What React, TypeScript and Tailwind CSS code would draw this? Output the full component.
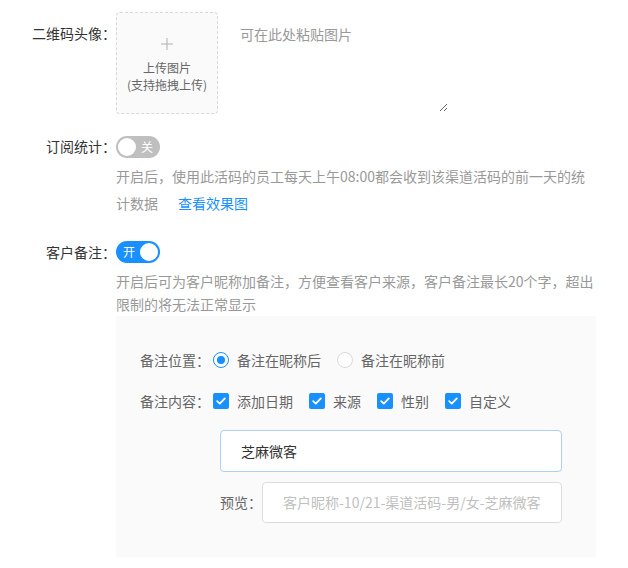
import React from "react";

const font = { fontFamily: '"Noto Sans CJK SC", "Noto Sans", sans-serif' };

function Check() {
  return (
    <span className="w-[16px] h-[16px] rounded-[2px] bg-[#1890ff] flex items-center justify-center shrink-0">
      <svg width="10" height="8" viewBox="0 0 10 8" fill="none">
        <path d="M1.2 4.2 L3.8 6.6 L8.8 1.4" stroke="#fff" strokeWidth="1.8" strokeLinecap="round" strokeLinejoin="round" />
      </svg>
    </span>
  );
}

function CheckItem({ label }: { label: string }) {
  return (
    <span className="flex items-center mr-[16px]">
      <Check />
      <span className="ml-[8px]">{label}</span>
    </span>
  );
}

export default function App() {
  return (
    <div className="w-[628px] h-[568px] bg-white text-[14px] text-[#333] pt-[12px] overflow-hidden" style={font}>
      {/* Row 1 */}
      <div className="flex items-start">
        <div className="w-[116px] text-right leading-[22px] pt-[10px]">二维码头像：</div>
        <div className="w-[102px] h-[102px] rounded-[4px] border border-dashed border-[#d9d9d9] bg-[#fafafa] flex flex-col items-center justify-center text-[12px] text-[#666] leading-[17px]">
          <svg width="12" height="12" viewBox="0 0 12 12" className="mb-[9px] mt-[5px]">
            <path d="M6 0 V12 M0 6 H12" stroke="#b0b0b0" strokeWidth="1" />
          </svg>
          <div>上传图片</div>
          <div>(支持拖拽上传)</div>
        </div>
        <textarea
          className="ml-[12px] w-[218px] h-[100px] px-[10px] pt-[11px] pb-[12px] leading-[22px] text-[14px] bg-transparent outline-none border-0 placeholder:text-[#999]"
          placeholder="可在此处粘贴图片"
          style={font}
        />
      </div>

      {/* Row 2 */}
      <div className="flex items-center mt-[22px]">
        <div className="w-[116px] text-right leading-[22px] -mt-[2px]">订阅统计：</div>
        <div className="w-[44px] h-[22px] rounded-full bg-[#bfbfbf] flex items-center px-[2px]">
          <span className="w-[18px] h-[18px] rounded-full bg-white" />
          <span className="flex-1 text-center text-white text-[12px] leading-[22px]">关</span>
        </div>
      </div>
      <div className="ml-[116px] w-[480px] mt-[5px] leading-[27px] text-[#999]">
        开启后，使用此活码的员工每天上午08:00都会收到该渠道活码的前一天的统计数据
        <span className="ml-[20px] text-[#1890ff]">查看效果图</span>
      </div>

      {/* Row 3 */}
      <div className="flex items-center mt-[24px]">
        <div className="w-[116px] text-right leading-[22px]">客户备注：</div>
        <div className="w-[44px] h-[22px] rounded-full bg-[#1890ff] flex items-center px-[2px]">
          <span className="flex-1 text-center text-white text-[12px] leading-[22px]">开</span>
          <span className="w-[18px] h-[18px] rounded-full bg-white" />
        </div>
      </div>
      <div className="ml-[116px] w-[480px] mt-[7px] leading-[23px] text-[#999]">
        开启后可为客户昵称加备注，方便查看客户来源，客户备注最长20个字，超出限制的将无法正常显示
      </div>

      {/* Panel */}
      <div className="ml-[116px] w-[480px] bg-[#fafafa] pt-[33px] pl-[24px] pb-[34px] text-[#666]">
        <div className="flex items-center h-[22px]">
          <span className="w-[73px]">备注位置：</span>
          <span className="flex items-center mr-[16px]">
            <span className="w-[16px] h-[16px] rounded-full border border-[#1890ff] bg-white flex items-center justify-center">
              <span className="w-[8px] h-[8px] rounded-full bg-[#1890ff]" />
            </span>
            <span className="ml-[8px]">备注在昵称后</span>
          </span>
          <span className="flex items-center">
            <span className="w-[16px] h-[16px] rounded-full border border-[#d9d9d9] bg-white" />
            <span className="ml-[8px]">备注在昵称前</span>
          </span>
        </div>
        <div className="flex items-center h-[22px] mt-[19px]">
          <span className="w-[73px]">备注内容：</span>
          <CheckItem label="添加日期" />
          <CheckItem label="来源" />
          <CheckItem label="性别" />
          <CheckItem label="自定义" />
        </div>
        <div className="ml-[80px] mt-[18px] w-[342px] h-[42px] rounded-[4px] border border-[#a9d2f8] bg-white flex items-center pl-[20px] text-[#333]">
          芝麻微客
        </div>
        <div className="ml-[80px] mt-[10px] flex items-center">
          <span className="w-[42px]">预览：</span>
          <div className="w-[300px] h-[41px] rounded-[4px] border border-[#dcdcdc] bg-white flex items-center pl-[20px] text-[#c0c0c0]">
            客户昵称-10/21-渠道活码-男/女-芝麻微客
          </div>
        </div>
      </div>
    </div>
  );
}
